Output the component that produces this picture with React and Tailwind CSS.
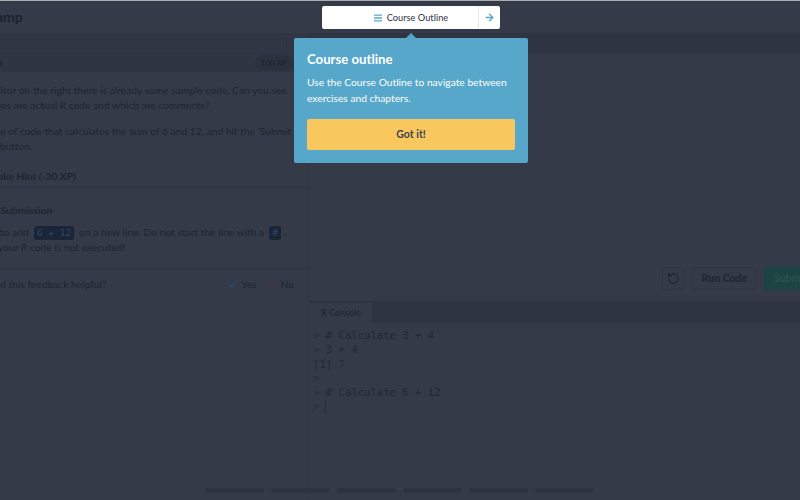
import { Check, X, RotateCcw, ArrowRight } from "lucide-react";

function Line({ children, className = "" }) {
  return <div className={`h-[15.4px] whitespace-nowrap leading-[15.4px] ${className}`}>{children}</div>;
}

function Chip({ children }) {
  return (
    <code className="rounded-[3px] bg-[#192539] px-[3px] font-['DejaVu_Sans_Mono',monospace] text-[9.5px] leading-[14px] text-[#34465f]">
      {children}
    </code>
  );
}

export default function App() {
  return (
    <div className="relative flex h-[500px] w-[800px] flex-col overflow-hidden bg-[#343a47] font-['Lato',sans-serif] text-[#20252f]">
      <div className="h-px bg-[#a9abaf]" />

      {/* Header */}
      <header className="flex h-[32px] items-center overflow-hidden pb-[2px]">
        <span className="-ml-[43px] text-[14px] font-bold text-[#1c2230]">DataCamp</span>
      </header>

      <div className="flex flex-1">
        {/* Left panel */}
        <section className="flex w-[308px] flex-col overflow-hidden">
          <div className="flex h-[21px] justify-end border-b border-[#2c3240] bg-[#303643]">
            <div className="w-px bg-[#2b313e]" />
            <div className="w-[21px]" />
          </div>
          <div className="flex h-[18px] items-center justify-between bg-[#2f3542] pr-[15px] font-bold">
            <span className="-ml-[42px] text-[8.5px]">Instructions</span>
            <span className="rounded-full bg-[#2c313e] px-[6px] text-[8px] leading-[16px]">100 XP</span>
          </div>

          <div className="-ml-[39px] mt-[11px] text-[10.25px]">
            <Line>In the editor on the right there is already some sample code. Can you see</Line>
            <Line>which lines are actual R code and which are comments?</Line>
            <Line className="mt-[10px]">Add a line of code that calculates the sum of 6 and 12, and hit the 'Submit</Line>
            <Line>Answer' button.</Line>
          </div>

          <div className="-ml-[7px] mt-[11.4px] flex h-[22px] items-center border-b border-[#2c323f] text-[10.25px] font-bold">
            Take Hint (-30 XP)
          </div>

          <div className="-ml-[43px] mt-[15px] text-[10.25px] font-bold leading-[14px]">Incorrect Submission</div>
          <div className="-ml-[49px] mt-[8px] text-[10.25px]">
            <Line className="flex items-center gap-[5px]">
              Make sure to add
              <Chip>6 + 12</Chip>
              on a new line. Do not start the line with a
              <Chip>#</Chip>
              <span className="-ml-[2px]">,</span>
            </Line>
            <Line>otherwise your R code is not executed!</Line>
          </div>

          <div className="mt-[12px] flex items-center justify-between border-t border-[#2c323f] pr-[14px] pt-[8px] text-[10.25px]">
            <span className="-ml-[49px]">Did you find this feedback helpful?</span>
            <span className="flex items-center">
              <Check size={11} strokeWidth={2.5} className="mr-[3px] text-[#1e5270]" />
              Yes
              <X size={11} strokeWidth={2} className="ml-[10px] mr-[3px] text-[#5a2a35]" />
              No
            </span>
          </div>
        </section>

        {/* Right panel */}
        <section className="flex flex-1 flex-col border-l border-[#2f3542]">
          <div className="h-[21px] bg-[#2e3441]" />
          <div className="flex h-[247px] items-end justify-end gap-[7px] pb-[11px]">
            <button className="grid h-[23px] w-[23px] place-content-center rounded-[3px] border border-[#2c3645] text-[#1f2431]">
              <RotateCcw size={13} />
            </button>
            <button className="h-[23px] w-[65px] rounded-[3px] border border-[#2c3645] text-[10.5px] font-bold">Run Code</button>
            <div className="h-[23px] w-[36px] overflow-hidden rounded-l-[3px] bg-[#1c4443] pl-[10px] text-[10.5px] font-bold leading-[23px] text-[#285250]">
              Submit
            </div>
          </div>
          <div className="ml-px h-[22px] bg-[#2e3441] pt-[2px]">
            <div className="flex h-full w-[62px] items-center justify-center bg-[#343a47] text-[9px] font-medium">R Console</div>
          </div>
          <div className="flex-1 pl-[4px] pt-[5px] font-['DejaVu_Sans_Mono',monospace] text-[10.6px] leading-[14.3px] text-[#232834]">
            <div><span className="text-[#1d3048]">&gt;</span> # Calculate 3 + 4</div>
            <div><span className="text-[#1d3048]">&gt;</span> 3 + 4</div>
            <div className="text-[#262b38]">[1] 7</div>
            <div className="text-[#1d3048]">&gt;</div>
            <div><span className="text-[#1d3048]">&gt;</span> # Calculate 6 + 12</div>
            <div className="flex items-center">
              <span className="text-[#1d3048]">&gt;</span>
              <span className="ml-[6px] h-[13px] w-px bg-[#262b38]" />
            </div>
          </div>
        </section>
      </div>

      {/* Footer placeholder bars */}
      <div className="absolute bottom-[7px] left-[205px] flex gap-[7px]">
        {[0, 1, 2, 3, 4, 5].map((i) => (
          <div key={i} className="h-[5px] w-[59px] rounded-full bg-[#2d3340]" />
        ))}
      </div>

      {/* Course Outline button */}
      <div className="absolute left-[322px] top-[6px] flex h-[23px] w-[178px] items-center rounded-[2px] bg-white text-[#3d4251]">
        <div className="flex flex-1 items-center justify-center gap-[5px] pl-[22px] text-[9.25px] font-medium">
          <svg width="8" height="8" viewBox="0 0 9 8" className="text-[#5aa6c9]">
            <path d="M0 0h9v1.6H0zM0 3.2h9v1.6H0zM0 6.4h9V8H0z" fill="currentColor" />
          </svg>
          Course Outline
        </div>
        <div className="grid h-full w-[22px] place-content-center border-l border-[#e6e8eb] text-[#5aa6c9]">
          <ArrowRight size={11} strokeWidth={3} />
        </div>
      </div>

      {/* Tour popover */}
      <div className="absolute left-[294px] top-[38px] w-[234px] rounded-[2px] bg-[#56a7c9] p-[13px] text-white">
        <div className="absolute -top-[5px] left-[112px] h-0 w-0 border-x-[5px] border-b-[5px] border-x-transparent border-b-[#56a7c9]" />
        <h2 className="text-[13.2px] font-bold leading-[16px]">Course outline</h2>
        <p className="mt-[7px] text-[10.25px] leading-[16px]">
          Use the Course Outline to navigate between exercises and chapters.
        </p>
        <button className="mt-[13px] block h-[31px] w-full rounded-[2px] bg-[#f8c85e] text-[10.5px] font-bold text-[#3d4251]">Got it!</button>
      </div>
    </div>
  );
}
